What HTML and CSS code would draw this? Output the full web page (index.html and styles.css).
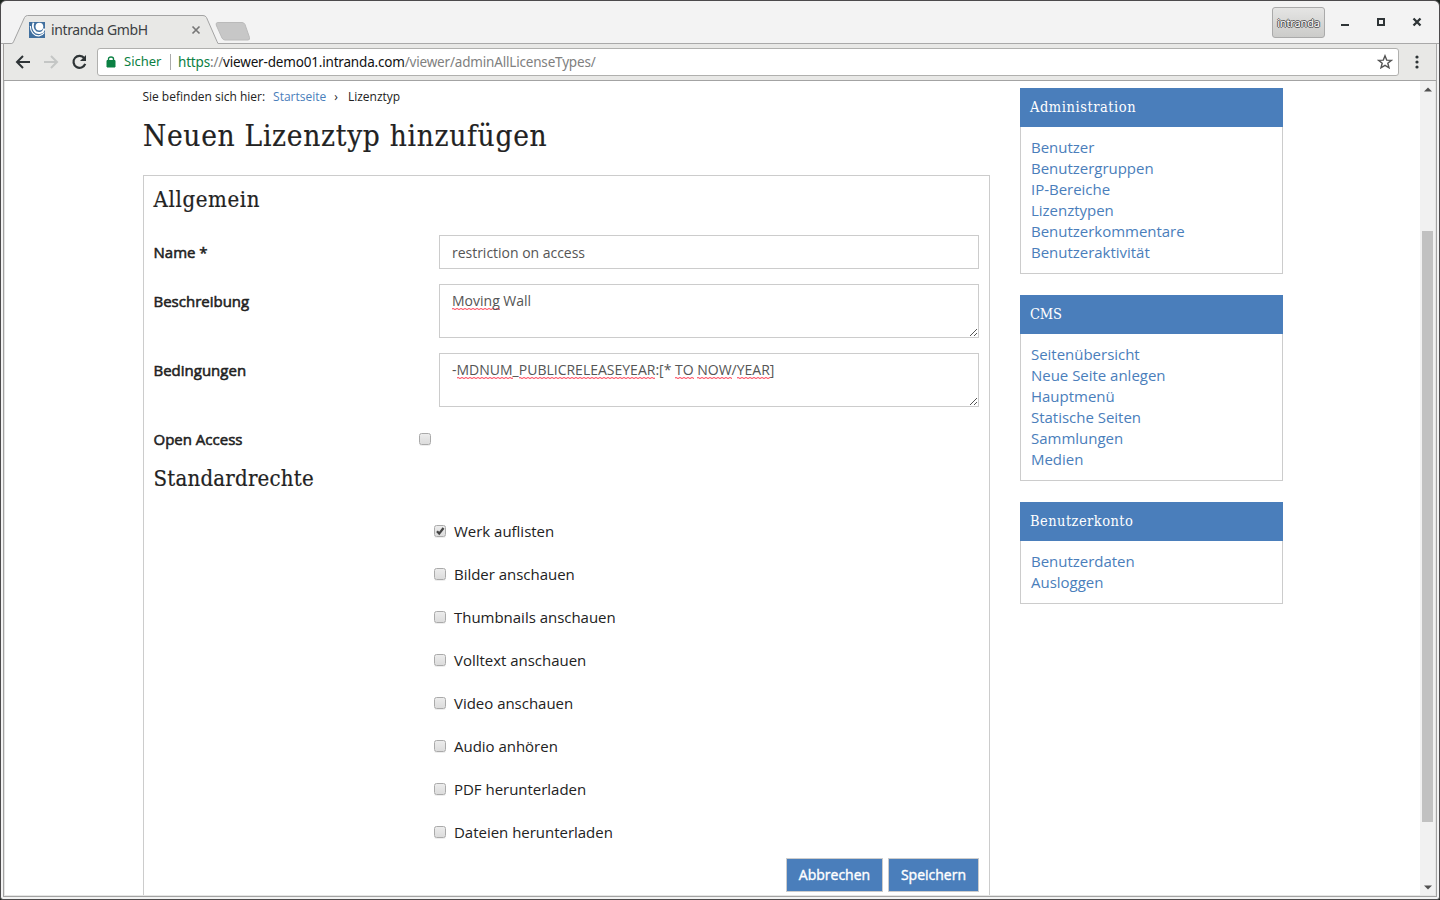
FILE: index.html
```
<!DOCTYPE html>
<html lang="de">
<head>
<meta charset="utf-8">
<title>intranda GmbH</title>
<link rel="stylesheet" href="styles.css">
</head>
<body>
<div class="window">
  <header class="titlebar">
    <svg class="tab-shape" width="214" height="30" viewBox="0 0 214 30"><path d="M0 28.500H7.500Q8.800 28.500 9.500 26.800L20.500 2.500Q21.500.5 23.500.5H199Q201.500.5 202.500 2.500L213 26.500L214 28.500V30H0Z" fill="#e8e8e6"/><path d="M0 28.500H7.500Q8.800 28.500 9.500 26.800L20.500 2.500Q21.500.5 23.500.5H199Q201.500.5 202.500 2.500L213 26.500L214 28.500" fill="none" stroke="#a3a3a3"/></svg>
    <div class="tab">
      <svg width="16" height="16" viewBox="0 0 16 16"><path d="M0 0H16V16H0Z" fill="#41709f"/><circle cx="10.400" cy="4.600" r="3.900" fill="#fff"/><g fill="none" stroke="#fff"><path d="M4.500 .8C2.500 6 5.500 11.300 10.500 11Q14.500 10.600 15.300 6.500" stroke-width="1.800"/><path d="M1.300 4C1.300 9.500 5 14.200 10 13.900Q13.500 13.400 15.300 10.500" stroke-width="1.100"/></g></svg>
      <span class="tab-title">intranda GmbH</span>
      <svg width="10" height="10" viewBox="0 0 10 10"><path d="M1.500 1.500 8.500 8.500M8.500 1.500 1.500 8.500" stroke="#777" stroke-width="1.700"/></svg>
    </div>
    <svg class="newtab" width="37" height="19" viewBox="0 0 37 19"><path d="M3 .5H27Q29 .5 30 2.500L34.500 15.500Q35 18 33 18H10Q8 18 7 16L1.200 3Q.5.500 3 .5Z" fill="#c7c7c7" stroke="#bababa"/></svg>
    <div class="controls">
      <span class="profile">intranda</span>
      <svg width="90" height="16" viewBox="0 0 90 16"><g fill="none" stroke="#2e3436" stroke-width="2"><path d="M8 10H16"/><path d="M45 4H51V10H45Z"/><path d="M80.500 3.500 87.500 10.500M87.500 3.500 80.500 10.500" stroke-width="2.300"/></g></svg>
    </div>
  </header>
  <div class="toolbar">
    <svg class="nav" width="76" height="20" viewBox="0 0 76 20"><g fill="none" stroke-width="2"><path d="M15 10H2.500M8 4 2 10 8 16" stroke="#2e3436"/><path d="M29 10H41.500M36 4 42 10 36 16" stroke="#c4c6c5"/><path d="M69.300 6.200A6 6 0 1 0 70.200 11.800" stroke="#2e3436" stroke-width="2.200"/></g><path d="M71 3V9H65Z" fill="#2e3436"/></svg>
    <div class="omnibox">
      <svg width="10" height="12" viewBox="0 0 10 12"><path d="M1 4.500H9V11H1Z" fill="#0b8043" stroke="#0b8043" stroke-linejoin="round"/><path d="M2.500 5V3Q2.500 1 5 1T7.500 3V5" fill="none" stroke="#0b8043" stroke-width="1.400"/></svg>
      <span class="secure">Sicher</span>
      <span class="url"><span class="scheme">https</span>://<b class="host">viewer-demo01.intranda.com</b><span class="path">/viewer/adminAllLicenseTypes/</span></span>
      <svg class="star" width="16" height="16" viewBox="0 0 16 16"><path d="M8 1.800 9.700 6.100 14.300 6.400 10.800 9.300 12 13.800 8 11.300 4 13.800 5.200 9.300 1.700 6.400 6.300 6.100Z" fill="none" stroke="#555" stroke-width="1.400"/></svg>
    </div>
    <svg class="more" width="4" height="14" viewBox="0 0 4 14"><g fill="#2e3436"><circle cx="2" cy="2" r="1.600"/><circle cx="2" cy="7" r="1.600"/><circle cx="2" cy="12" r="1.600"/></g></svg>
  </div>
  <div class="viewport">
    <main class="main">
      <nav class="crumbs"><span class="c1">Sie befinden sich hier:</span><a class="c2">Startseite</a><span class="c3">›</span><span class="c4">Lizenztyp</span></nav>
      <h1 class="h1">Neuen Lizenztyp hinzufügen</h1>
      <section class="panel">
        <h2 class="h2 general">Allgemein</h2>
        <div class="row"><label class="label">Name *</label><div class="field single">restriction on access</div></div>
        <div class="row"><label class="label">Beschreibung</label><div class="field area"><span class="sp">Moving</span> Wall<svg class="grip" width="9" height="9" viewBox="0 0 9 9"><path d="M1 8 8 1M5 8 8 5" stroke="#555" stroke-width="1"/></svg></div></div>
        <div class="row"><label class="label">Bedingungen</label><div class="field area">-<span class="sp">MDNUM</span>_<span class="sp">PUBLICRELEASEYEAR</span>:[* <span class="sp">TO</span> <span class="sp">NOW</span>/<span class="sp">YEAR</span>]<svg class="grip" width="9" height="9" viewBox="0 0 9 9"><path d="M1 8 8 1M5 8 8 5" stroke="#555" stroke-width="1"/></svg></div></div>
        <div class="row open"><label class="label">Open Access</label><i class="cb"></i></div>
        <h2 class="h2 rights">Standardrechte</h2>
        <div class="checks">
          <div class="check"><i class="cb"><svg width="11" height="11" viewBox="0 0 11 11"><path d="M2 5.300 4.200 7.600 8.500 2" fill="none" stroke="#444" stroke-width="2.300"/></svg></i>Werk auflisten</div>
          <div class="check"><i class="cb"></i>Bilder anschauen</div>
          <div class="check"><i class="cb"></i>Thumbnails anschauen</div>
          <div class="check"><i class="cb"></i>Volltext anschauen</div>
          <div class="check"><i class="cb"></i>Video anschauen</div>
          <div class="check"><i class="cb"></i>Audio anhören</div>
          <div class="check"><i class="cb"></i>PDF herunterladen</div>
          <div class="check"><i class="cb"></i>Dateien herunterladen</div>
        </div>
        <div class="actions"><span class="btn cancel">Abbrechen</span><span class="btn save">Speichern</span></div>
      </section>
    </main>
    <aside class="side">
      <section class="box"><h3 class="h3">Administration</h3><div class="links"><a>Benutzer</a><a>Benutzergruppen</a><a>IP-Bereiche</a><a>Lizenztypen</a><a>Benutzerkommentare</a><a>Benutzeraktivität</a></div></section>
      <section class="box"><h3 class="h3 cms">CMS</h3><div class="links"><a>Seitenübersicht</a><a>Neue Seite anlegen</a><a>Hauptmenü</a><a>Statische Seiten</a><a>Sammlungen</a><a>Medien</a></div></section>
      <section class="box"><h3 class="h3 account">Benutzerkonto</h3><div class="links"><a>Benutzerdaten</a><a>Ausloggen</a></div></section>
    </aside>
    <div class="scrollbar">
      <svg width="8" height="5" viewBox="0 0 8 5"><path d="M0 4.500 4 .5 8 4.500Z" fill="#505050"/></svg>
      <i class="thumb"></i>
      <svg width="8" height="5" viewBox="0 0 8 5"><path d="M0 .5H8L4 4.500Z" fill="#505050"/></svg>
    </div>
  </div>
</div>
</body>
</html>
```

FILE: styles.css
```
* { box-sizing: border-box; }
body { margin: 0; background: #1c241e; font-family: "Open Sans", sans-serif; color: #222; overflow: hidden; }
.window { width: 1440px; height: 900px; border: 1px solid #4c4a4c; border-radius: 6px 6px 3px 3px; background: #f3f3f3; display: flex; flex-direction: column; padding: 0 2px; overflow: hidden; }
.titlebar { height: 43px; display: flex; flex: none; position: relative; margin: 0 -2px; padding-left: 28px; border-bottom: 1px solid #a9a9a9; }
.tab-shape { position: absolute; left: 3px; top: 14px; }
.tab { position: relative; width: 188px; height: 30px; margin-top: 14px; display: flex; align-items: center; }
.tab-title { flex: 1; margin-left: 6px; font: 14px/20px "Noto Sans", sans-serif; letter-spacing: -.38px; color: #3c4043; }
.tab > svg:last-child { margin-right: 16px; }
.newtab { margin: 21px 0 0 -2px; }
.controls { display: flex; margin-left: auto; padding-right: 16px; }
.profile { width: 53px; height: 31px; margin: 6px 8px 0 0; border: 1px solid #aaa; border-radius: 3px; background: linear-gradient(#e5e5e4, #cbcbc9); color: #fff; font: 11px/30px "Noto Sans", sans-serif; letter-spacing: -.15px; text-align: center; text-shadow: 1px 0 #555, -1px 0 #555, 0 1px #555, 0 -1px #555; }
.controls svg { margin-top: 14px; }
.toolbar { height: 37px; flex: none; display: flex; align-items: center; background: #e8e8e6; border-left: 1px solid #a29f9d; border-right: 1px solid #a9a9a9; border-bottom: 1px solid #a3a3a3; padding-left: 11px; }
.nav { margin-right: 6px; }
.omnibox { width: 1302px; height: 28px; display: flex; align-items: center; background: #fff; border: 1px solid #b0b0ae; border-radius: 3px; padding: 0 5px 0 8px; font: 13.5px/24px "Noto Sans", sans-serif; }
.secure { color: #0b8043; margin-left: 8px; width: 47px; height: 16px; line-height: 15px; font-size: 13px; border-right: 1px solid #aaa; }
.url { margin-left: 7px; color: #808080; white-space: nowrap; letter-spacing: -.18px; }
.scheme { color: #0b8043; }
.host { color: #111; font-weight: 400; }
.star { margin-left: auto; }
.more { margin-left: 16px; }
.viewport { height: 816px; flex: none; background: #fff; border: solid #a3a3a3; border-width: 0 1px 1px; display: flex; position: relative; overflow: hidden; }
.viewport::after { content: ""; position: absolute; inset: 0; border: solid #e5e5e4; border-width: 0 1px 1px; }
.main { width: 847px; margin-left: 139px; flex: none; }
.crumbs { font-size: 12px; line-height: 16px; padding-top: 8px; height: 24px; margin-left: -.6px; white-space: nowrap; display: flex; }
.c2 { color: #4a7ebb; margin-left: 8px; }
.c3 { margin-left: 8px; }
.c4 { margin-left: 10px; }
.h1, .h2, .h3 { margin: 0; font-family: "DejaVu Serif Condensed", "DejaVu Serif", serif; font-stretch: condensed; font-weight: 400; white-space: nowrap; -webkit-text-stroke: .2px; }
.h1 { font-size: 29.500px; letter-spacing: .72px; line-height: 40px; height: 70px; padding-top: 11px; }
.panel { border: 1px solid #ccc; height: 740px; padding: 0 10px 0 9.500px; }
.h2 { font-size: 22px; line-height: 28px; }
.general { margin-top: 10px; margin-bottom: 21px; letter-spacing: .65px; }
.row { display: flex; margin-bottom: 15px; }
.label { width: 285.500px; font-size: 15px; line-height: 34px; -webkit-text-stroke: .55px #222; }
.field { position: relative; width: 540px; height: 34px; border: 1px solid #ccc; padding: 6px 12px; font-size: 14px; line-height: 20px; color: #555; white-space: nowrap; }
.single { padding-top: 7px; letter-spacing: -.02px; }
.area { height: 54px; }
.sp { display: inline-block; height: 20px; vertical-align: top; background: repeating-linear-gradient(90deg, #ff6b7b 0 2px, #ffc9cf 2px 4px) 0 17px / 100% 1px no-repeat, repeating-linear-gradient(90deg, #ffc9cf 0 2px, #ff6b7b 2px 4px) 0 18px / 100% 1px no-repeat; }
.grip { position: absolute; right: 0; bottom: 0; }
.open { height: 34px; align-items: center; margin-bottom: 0; }
.cb { display: block; width: 12px; height: 12px; flex: none; border: 1px solid #aaa; border-radius: 2.500px; background: linear-gradient(#ececec, #dcdcdc); box-shadow: 0 1px #eee; }
.cb svg { display: block; }
.open .cb { margin-left: -20px; }
.rights { margin-top: 9px; margin-bottom: 16px; letter-spacing: .22px; }
.checks { padding-left: 280.500px; }
.check { height: 43px; display: flex; align-items: center; gap: 8px; font-size: 15px; letter-spacing: -.02px; }
.actions { display: flex; justify-content: flex-end; gap: 5px; margin-top: 5px; }
.btn { height: 34px; border: 1px solid #ccc; background: #4a7ebb; color: #fff; text-align: center; font-size: 14px; line-height: 31px; -webkit-text-stroke: .4px #fff; }
.cancel { width: 97px; }
.save { width: 91px; }
.side { width: 263px; margin-left: 30px; padding-top: 7px; flex: none; }
.box { margin-bottom: 21px; }
.h3 { background: #4a7ebb; color: #fff; height: 39px; padding-left: 10px; font-size: 14.500px; letter-spacing: .55px; line-height: 38px; -webkit-text-stroke: 0; }
.cms { letter-spacing: -.2px; }
.account { letter-spacing: .45px; }
.links { border: 1px solid #ccc; border-top: 0; padding: 10px; display: flex; flex-direction: column; font-size: 15px; line-height: 21px; letter-spacing: -.02px; color: #4a7ebb; }
.scrollbar { width: 15px; height: 814px; margin-left: auto; margin-right: 1px; background: #f1f1f1; display: flex; flex-direction: column; align-items: center; padding: 6px 0 5px; flex: none; }
.thumb { width: 11px; height: 591px; margin: 139px 0 auto; background: #c1c1c1; }
```
